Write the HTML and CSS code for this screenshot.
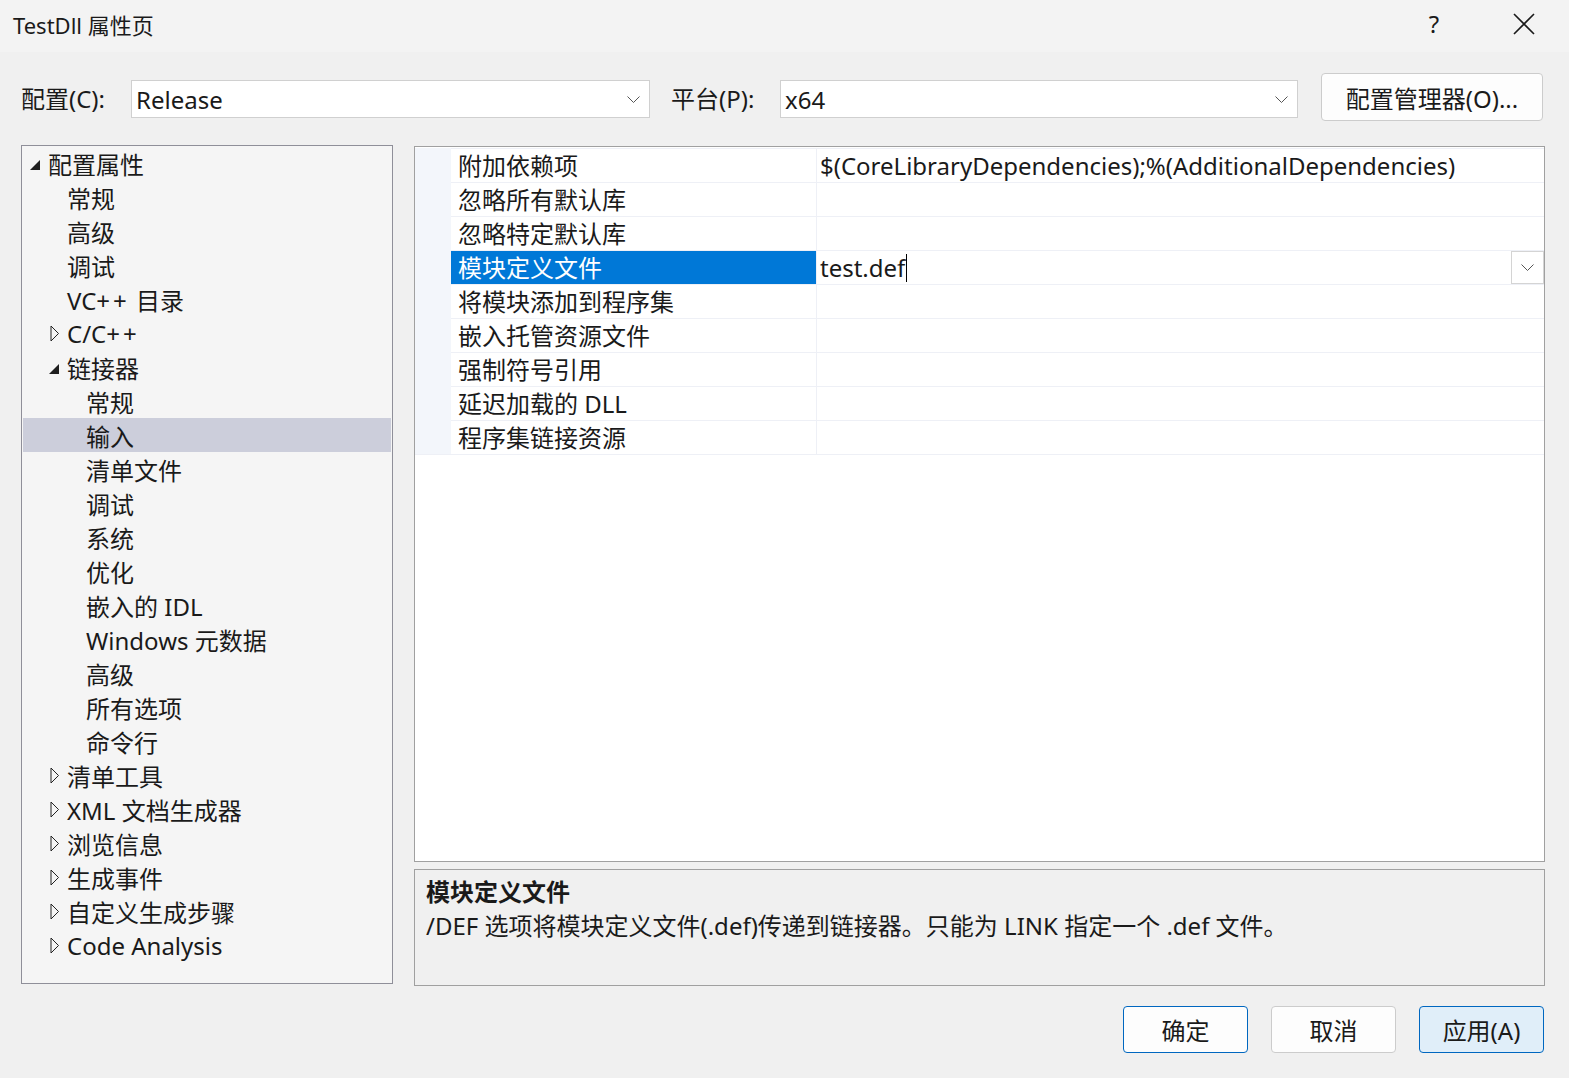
FILE: index.html
```html
<!DOCTYPE html>
<html lang="zh-CN">

<head>
    <meta charset="UTF-8">
    <meta name="viewport" content="width=device-width, initial-scale=1.0">
    <title>TestDll 属性页</title>
    <link rel="stylesheet" href="styles.css">
</head>

<body>
    <div class="window">
        <div class="titlebar">
            <div class="title">TestDll 属性页</div>
            <div class="title-btn help">?</div>
            <div class="title-btn close">
                <svg width="22" height="22" viewBox="0 0 22 22"><path d="M1 1 L21 21 M21 1 L1 21" stroke="#1a1a1a" stroke-width="1.6" fill="none"/></svg>
            </div>
        </div>

        <div class="toolbar">
            <label class="tb-label">配置(C):</label>
            <div class="combo combo-config">
                <span>Release</span>
                <svg class="chev" width="13" height="7" viewBox="0 0 13 7"><path d="M0.5 0.5 L6.5 6.5 L12.5 0.5" stroke="#555" fill="none"/></svg>
            </div>
            <label class="tb-label tb-platform">平台(P):</label>
            <div class="combo combo-platform">
                <span>x64</span>
                <svg class="chev" width="13" height="7" viewBox="0 0 13 7"><path d="M0.5 0.5 L6.5 6.5 L12.5 0.5" stroke="#555" fill="none"/></svg>
            </div>
            <button class="btn btn-manager">配置管理器(O)...</button>
        </div>

        <div class="main">
            <div class="tree">
                <div class="node l0"><span class="toggle"><svg class="open" width="10" height="10" viewBox="0 0 10 10"><polygon points="10,0 10,10 0,10" fill="#1e1e1e"/></svg></span>配置属性</div>
                <div class="node l1"><span class="toggle"></span>常规</div>
                <div class="node l1"><span class="toggle"></span>高级</div>
                <div class="node l1"><span class="toggle"></span>调试</div>
                <div class="node l1"><span class="toggle"></span><span>VC<span class="pp">++</span> 目录</span></div>
                <div class="node l1"><span class="toggle"><svg class="closed" width="10" height="17" viewBox="0 0 10 17"><polygon points="1,1 8.5,8.5 1,16" fill="none" stroke="#222"/></svg></span><span>C/C<span class="pp">++</span></span></div>
                <div class="node l1"><span class="toggle"><svg class="open" width="10" height="10" viewBox="0 0 10 10"><polygon points="10,0 10,10 0,10" fill="#1e1e1e"/></svg></span>链接器</div>
                <div class="node l2"><span class="toggle"></span>常规</div>
                <div class="node l2 selected"><span class="toggle"></span>输入</div>
                <div class="node l2"><span class="toggle"></span>清单文件</div>
                <div class="node l2"><span class="toggle"></span>调试</div>
                <div class="node l2"><span class="toggle"></span>系统</div>
                <div class="node l2"><span class="toggle"></span>优化</div>
                <div class="node l2"><span class="toggle"></span>嵌入的 IDL</div>
                <div class="node l2"><span class="toggle"></span>Windows 元数据</div>
                <div class="node l2"><span class="toggle"></span>高级</div>
                <div class="node l2"><span class="toggle"></span>所有选项</div>
                <div class="node l2"><span class="toggle"></span>命令行</div>
                <div class="node l1"><span class="toggle"><svg class="closed" width="10" height="17" viewBox="0 0 10 17"><polygon points="1,1 8.5,8.5 1,16" fill="none" stroke="#222"/></svg></span>清单工具</div>
                <div class="node l1"><span class="toggle"><svg class="closed" width="10" height="17" viewBox="0 0 10 17"><polygon points="1,1 8.5,8.5 1,16" fill="none" stroke="#222"/></svg></span>XML 文档生成器</div>
                <div class="node l1"><span class="toggle"><svg class="closed" width="10" height="17" viewBox="0 0 10 17"><polygon points="1,1 8.5,8.5 1,16" fill="none" stroke="#222"/></svg></span>浏览信息</div>
                <div class="node l1"><span class="toggle"><svg class="closed" width="10" height="17" viewBox="0 0 10 17"><polygon points="1,1 8.5,8.5 1,16" fill="none" stroke="#222"/></svg></span>生成事件</div>
                <div class="node l1"><span class="toggle"><svg class="closed" width="10" height="17" viewBox="0 0 10 17"><polygon points="1,1 8.5,8.5 1,16" fill="none" stroke="#222"/></svg></span>自定义生成步骤</div>
                <div class="node l1"><span class="toggle"><svg class="closed" width="10" height="17" viewBox="0 0 10 17"><polygon points="1,1 8.5,8.5 1,16" fill="none" stroke="#222"/></svg></span>Code Analysis</div>
            </div>

            <div class="right">
                <div class="grid">
                    <div class="props">
                        <div class="prop"><div class="gutter"></div><div class="name">附加依赖项</div><div class="value">$(CoreLibraryDependencies);%(AdditionalDependencies)</div></div>
                        <div class="prop"><div class="gutter"></div><div class="name">忽略所有默认库</div><div class="value"></div></div>
                        <div class="prop"><div class="gutter"></div><div class="name">忽略特定默认库</div><div class="value"></div></div>
                        <div class="prop active"><div class="gutter"></div><div class="name">模块定义文件</div><div class="value"><span>test.def</span><span class="caret"></span>
                            <div class="drop"><svg width="13" height="7" viewBox="0 0 13 7"><path d="M0.5 0.5 L6.5 6.5 L12.5 0.5" stroke="#555" fill="none"/></svg></div></div></div>
                        <div class="prop"><div class="gutter"></div><div class="name">将模块添加到程序集</div><div class="value"></div></div>
                        <div class="prop"><div class="gutter"></div><div class="name">嵌入托管资源文件</div><div class="value"></div></div>
                        <div class="prop"><div class="gutter"></div><div class="name">强制符号引用</div><div class="value"></div></div>
                        <div class="prop"><div class="gutter"></div><div class="name">延迟加载的 DLL</div><div class="value"></div></div>
                        <div class="prop"><div class="gutter"></div><div class="name">程序集链接资源</div><div class="value"></div></div>
                    </div>
                </div>

                <div class="desc">
                    <div class="desc-title">模块定义文件</div>
                    <div class="desc-text">/DEF 选项将模块定义文件(.def)传递到链接器。只能为 LINK 指定一个 .def 文件。</div>
                </div>

                <div class="buttons">
                    <button class="btn btn-ok">确定</button>
                    <button class="btn btn-cancel">取消</button>
                    <button class="btn btn-apply">应用(A)</button>
                </div>
            </div>
        </div>
    </div>
</body>

</html>
```

FILE: styles.css
```css
* {
    font-family: "Noto Sans", "Noto Sans CJK SC", sans-serif;
    box-sizing: border-box;
}

body {
    margin: 0;
    background-color: #F0F0F0;
    color: #1A1A1A;
    font-size: 24px;
    overflow: hidden;
}

.window {
    width: 1569px;
    height: 1078px;
}

.titlebar {
    height: 52px;
    background-color: #F3F3F3;
    display: flex;
    align-items: center;
    padding: 0 0 5px 13px;
}

.title {
    flex: 1;
    font-size: 22px;
}

.title-btn {
    width: 90px;
    display: flex;
    justify-content: center;
    align-items: center;
}

.help {
    font-size: 24px;
}

.toolbar {
    display: flex;
    align-items: flex-start;
    margin-top: 21px;
    padding-left: 21px;
    height: 48px;
}

.tb-label {
    width: 110px;
    margin-top: 7px;
    line-height: 38px;
}

.tb-platform {
    width: 109px;
    margin-left: 21px;
}

.combo {
    margin-top: 7px;
    height: 38px;
    background-color: #FFFFFF;
    border: 1px solid #D0D0D0;
    display: flex;
    align-items: center;
    padding: 0 9px 0 4px;
}

.combo>span {
    flex: 1;
}

.combo-config {
    width: 519px;
}

.combo-platform {
    width: 518px;
}

.btn {
    font-size: 24px;
    color: #1A1A1A;
    background-color: #FDFDFD;
    border: 1px solid #CCCCCC;
    border-radius: 4px;
    padding: 0;
}

.btn-manager {
    width: 222px;
    height: 48px;
    margin-left: 23px;
}

.main {
    display: flex;
    gap: 21px;
    margin-top: 24px;
    padding-left: 21px;
}

.tree {
    width: 372px;
    height: 839px;
    background-color: #F5F5F5;
    border: 1px solid #8F8F99;
    padding: 0 1px;
}

.node {
    height: 34px;
    display: flex;
    align-items: center;
    white-space: nowrap;
}

.pp {
    letter-spacing: 3px;
}

.l0 {
    padding-left: 6px;
}

.l1 {
    padding-left: 25px;
}

.l2 {
    padding-left: 44px;
}

.toggle {
    width: 19px;
    flex: none;
    display: flex;
    align-items: center;
}

.toggle .open {
    margin: 3px 0 0 1px;
}

.toggle .closed {
    margin-left: 2px;
}

.selected {
    background-color: #CCCEDB;
}

.right {
    width: 1131px;
    margin-top: 1px;
    display: flex;
    flex-direction: column;
}

.grid {
    height: 716px;
    background-color: #FFFFFF;
    border: 1px solid #A0A0A0;
    padding-top: 1px;
}

.props {
    border-bottom: 1px solid #EEF0F6;
}

.prop {
    display: flex;
    height: 34px;
}

.gutter {
    width: 36px;
    background-color: #F3F6FB;
}

.name {
    width: 365px;
    border-top: 1px solid #EEF0F6;
    padding-left: 7px;
    line-height: 33px;
    white-space: nowrap;
}

.value {
    flex: 1;
    border-top: 1px solid #EEF0F6;
    border-left: 1px solid #EEF0F6;
    padding-left: 3px;
    display: flex;
    align-items: center;
    white-space: nowrap;
}

.active .name {
    background-color: #0078D7;
    color: #FFFFFF;
}

.caret {
    width: 1px;
    height: 28px;
    background-color: #000000;
    margin-left: 1px;
}

.drop {
    margin-left: auto;
    width: 33px;
    height: 33px;
    border: 1px solid #D4D4D4;
    background-color: #FFFFFF;
    display: flex;
    justify-content: center;
    align-items: center;
}

.desc {
    margin-top: 7px;
    height: 117px;
    border: 1px solid #A0A0A0;
    padding: 5px 11px;
    line-height: 34px;
}

.desc-title {
    font-weight: bold;
}

.buttons {
    display: flex;
    justify-content: flex-end;
    gap: 23px;
    margin-top: 20px;
    padding-right: 1px;
}

.buttons>.btn {
    width: 125px;
    height: 47px;
}

.btn-ok {
    border-color: #0067C0 !important;
}

.btn-apply {
    border-color: #0067C0 !important;
    background-color: #E0EEF9 !important;
}
```
